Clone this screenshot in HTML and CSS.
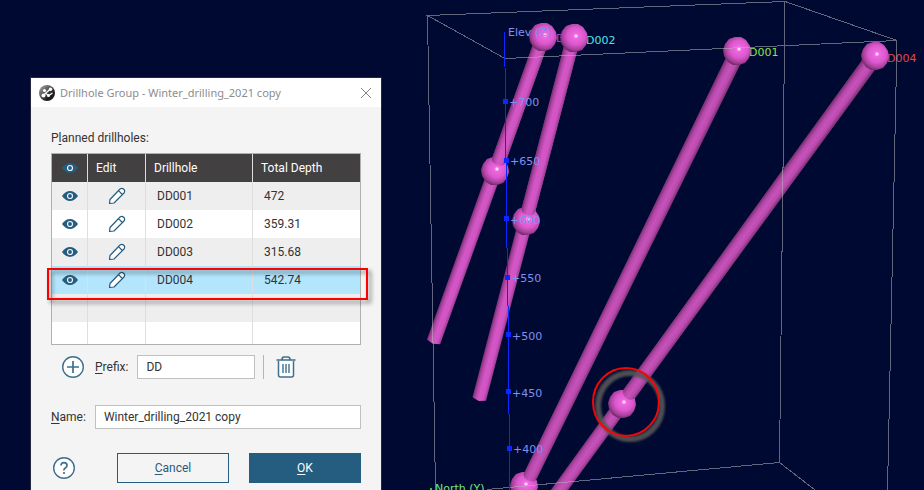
FILE: index.html
```html
<!DOCTYPE html>
<html lang="en">
<head>
<meta charset="utf-8">
<title>Drillhole Group</title>
<link rel="stylesheet" href="styles.css">
</head>
<body>
<main class="stage">
  <svg class="scene" viewBox="0 0 924 490" preserveAspectRatio="xMinYMin slice" role="img" aria-label="Drillhole scene">
    <defs>
      <linearGradient id="tube">
        <stop offset="0" stop-color="#7c2d74"/>
        <stop offset=".2" stop-color="#b046a4"/>
        <stop offset=".45" stop-color="#d456c7"/>
        <stop offset=".75" stop-color="#d054c3"/>
        <stop offset="1" stop-color="#9a3d90"/>
      </linearGradient>
      <linearGradient id="tube-dim">
        <stop offset="0" stop-color="#742b6d"/>
        <stop offset=".25" stop-color="#b248a7"/>
        <stop offset=".5" stop-color="#c851bb"/>
        <stop offset=".75" stop-color="#b84bac"/>
        <stop offset="1" stop-color="#782d70"/>
      </linearGradient>
      <radialGradient id="ball" cx=".57" cy=".43" r=".62">
        <stop offset="0" stop-color="#ffffff"/>
        <stop offset=".05" stop-color="#ffd0f8"/>
        <stop offset=".14" stop-color="#ee68df"/>
        <stop offset=".5" stop-color="#dc58ce"/>
        <stop offset=".78" stop-color="#a8409c"/>
        <stop offset="1" stop-color="#5e2358"/>
      </radialGradient>
      <path id="sphere" d="M-2-14H4L9-11 13-5 14 1 12 7 8 12 2 14H-4L-9 11-13 5-14-1-12-7-8-12Z" fill="url(#ball)"/>
      <filter id="soft" x="-20%" y="-20%" width="140%" height="140%"><feGaussianBlur stdDeviation="1"/></filter>
    </defs>

    <g class="label">
      <text x="556" y="42" fill="#a04cf0">D</text>
      <text x="586" y="44" fill="#4fe3e6">D002</text>
    </g>

    <path d="M-7 0H7V324L0 326-7 324Z" fill="url(#tube)" transform="translate(543 37) rotate(19.75)"/>
    <use href="#sphere" x="495" y="171"/>
    <path d="M-7 0H7V130Q7 136 0 136T-7 130Z" fill="url(#tube)" transform="translate(543 37) rotate(19.75)"/>
    <use href="#sphere" x="543" y="37"/>

    <path d="M-7 0H7V372L0 374-7 372Z" fill="url(#tube)" transform="translate(573 39) rotate(14.6)"/>
    <use href="#sphere" x="526" y="221"/>
    <path d="M-7 0H7V176Q7 182 0 182T-7 176Z" fill="url(#tube)" transform="translate(573 39) rotate(14.6)"/>
    <use href="#sphere" x="574" y="38"/>

    <g class="label">
      <text x="749" y="56" fill="#8fe04a">D001</text>
      <text x="887" y="62" fill="#e0464e">D004</text>
    </g>
    <use href="#sphere" x="524" y="486"/>
    <path d="M-8 0H8L7 472Q7 478 0 478T-7 472Z" fill="url(#tube-dim)" transform="translate(738 51) rotate(26.04)"/>
    <use href="#sphere" x="737" y="51"/>

    <path d="M-8 0H8L7 561H-7Z" fill="url(#tube-dim)" transform="translate(875 56) rotate(36.02)"/>
    <use href="#sphere" x="622" y="404"/>
    <path d="M-8 0H8L7 416Q7 423 0 423T-7 416Z" fill="url(#tube-dim)" transform="translate(875 56) rotate(36.02)"/>
    <use href="#sphere" x="875" y="56"/>

    <path class="frame" d="M427.500 15.500 785 1.500 897 40.500 505 58.500ZM427.500 15.500 435.500 490M785 1.500 779.500 462.500M897 40.500 887.500 490M487 489.500 779.500 462.500 815 490"/>

    <path class="axis" d="M504.500 32 505.500 101 506.500 218 508.500 334 509.500 490"/>
    <g fill="#0a28ff">
      <rect x="503" y="99" width="5" height="5"/>
      <rect x="504" y="158" width="5" height="5"/>
      <rect x="504" y="216" width="5" height="5"/>
      <rect x="505" y="275" width="5" height="5"/>
      <rect x="506" y="332" width="5" height="5"/>
      <rect x="506" y="389" width="5" height="5"/>
      <rect x="507" y="446" width="5" height="5"/>
    </g>
    <g class="label" fill="#7f90f2">
      <text x="508" y="36">Elev (Z)</text>
      <text x="509" y="106">+700</text>
      <text x="510" y="165">+650</text>
      <text x="510" y="224">+600</text>
      <text x="511" y="282">+550</text>
      <text x="512" y="340">+500</text>
      <text x="512" y="397">+450</text>
      <text x="513" y="453">+400</text>
    </g>
    <text class="label" x="435" y="492" fill="#6fe77c">North (Y)</text>
    <path d="M430 488H432V490H430Z" fill="#1fd61f"/>

    <ellipse cx="630" cy="406" rx="32" ry="33" fill="none" stroke="#555" stroke-opacity=".9" stroke-width="6" filter="url(#soft)"/>
    <ellipse cx="626" cy="402" rx="33" ry="34" fill="none" stroke="#f00808" stroke-width="2"/>
  </svg>

  <form class="dialog" aria-labelledby="title">
    <header class="titlebar">
      <svg class="logo" viewBox="0 0 16 16" aria-hidden="true">
        <defs><linearGradient id="lg" x2="1" y2="1"><stop offset=".2" stop-color="#858585"/><stop offset=".7" stop-color="#1c1c1c"/></linearGradient></defs>
        <circle cx="8" cy="8" r="8" fill="url(#lg)"/>
        <path d="M3 11.500 12 3.500M6.500 8.500 10 10.500 13.500 8" fill="none" stroke="#fff" stroke-width="1.200"/>
        <g fill="#fff"><circle cx="5.500" cy="5.500" r="1.600"/><circle cx="11.500" cy="4.200" r="1.700"/><circle cx="4.500" cy="10.500" r="2"/><circle cx="9.500" cy="10.500" r="1.500"/></g>
      </svg>
      <h1 id="title">Drillhole Group - Winter_drilling_2021 copy</h1>
      <button class="close" type="button" aria-label="Close">
        <svg viewBox="0 0 12 12"><path d="M1 1 11 11M11 1 1 11" stroke="#858585" fill="none"/></svg>
      </button>
    </header>

    <div class="body">
      <svg class="symbols" aria-hidden="true">
        <symbol id="eye" viewBox="0 0 16 10"><path d="M0 5Q3.500 0 8 0T16 5Q12.500 10 8 10T0 5Z" fill="#255d80"/><circle cx="8" cy="5" r="2.500" fill="none" stroke="#eef5f9" stroke-width="1.200"/></symbol>
        <symbol id="pencil" viewBox="0 0 18 18"><path d="M1.500 16.500 2 12.500 12 2Q14 .8 15.700 2.300T16 6L6 16ZM10.500 3.700 14.300 7.500" fill="#fff" stroke="#255d80" stroke-width="1.200" stroke-linejoin="round"/></symbol>
      </svg>
      <p class="caption" id="planned">P<u>l</u>anned drillholes:</p>
      <div class="table-wrap">
        <table aria-labelledby="planned">
          <colgroup><col class="c-eye"><col class="c-edit"><col class="c-name"><col></colgroup>
          <thead>
            <tr><th><svg class="eye"><use href="#eye"/></svg></th><th>Edit</th><th>Drillhole</th><th>Total Depth</th></tr>
          </thead>
          <tbody>
            <tr><td><svg class="eye"><use href="#eye"/></svg></td><td><svg class="pencil"><use href="#pencil"/></svg></td><td>DD001</td><td>472</td></tr>
            <tr><td><svg class="eye"><use href="#eye"/></svg></td><td><svg class="pencil"><use href="#pencil"/></svg></td><td>DD002</td><td>359.31</td></tr>
            <tr><td><svg class="eye"><use href="#eye"/></svg></td><td><svg class="pencil"><use href="#pencil"/></svg></td><td>DD003</td><td>315.68</td></tr>
            <tr class="selected"><td><svg class="eye"><use href="#eye"/></svg></td><td><svg class="pencil"><use href="#pencil"/></svg></td><td>DD004</td><td>542.74</td></tr>
            <tr><td></td><td></td><td></td><td></td></tr>
            <tr class="short"><td></td><td></td><td></td><td></td></tr>
          </tbody>
        </table>
        <div class="highlight"></div>
      </div>

      <div class="prefix-row">
        <button class="icon" type="button" aria-label="Add drillhole">
          <svg viewBox="0 0 22 22"><circle cx="11" cy="11" r="10.300" fill="#fff"/><path d="M11 5V17M5 11H17" stroke-width="1.700"/></svg>
        </button>
        <label for="prefix"><u>P</u>refix:</label>
        <input id="prefix" type="text" value="DD">
        <span class="divider"></span>
        <button class="icon" type="button" aria-label="Delete drillhole">
          <svg viewBox="0 0 22 22"><path d="M3.500 5V19Q3.500 21 5.500 21H16.500Q18.500 21 18.500 19V5" fill="#fff" stroke-width="1.500"/><path d="M1.500 4H20.500M7 4Q7 1 9 1H13Q15 1 15 4" stroke-width="1.700"/><path d="M8 8V17M11 8V17M14 8V17"/></svg>
        </button>
      </div>

      <div class="name-row">
        <label for="name"><u>N</u>ame:</label>
        <input id="name" type="text" value="Winter_drilling_2021 copy">
      </div>

      <footer class="actions">
        <button class="icon help" type="button" aria-label="Help">
          <svg viewBox="0 0 22 22"><circle cx="11" cy="11" r="10.300" fill="#fff"/><path d="M8 8.500Q8 5.700 11 5.700T14 8.500Q14 10 12.300 11T11 13.500" stroke-width="1.700"/><circle class="dot" cx="11" cy="16" r="1.100"/></svg>
        </button>
        <button class="btn" type="button"><u>C</u>ancel</button>
        <button class="btn primary" type="submit"><u>O</u>K</button>
      </footer>
    </div>
  </form>
</main>
</body>
</html>
```
FILE: styles.css
```css
* { box-sizing: border-box; }

body {
  margin: 0;
  background: #000931;
  color: #333;
  font: 12px/16px Roboto, "Liberation Sans", sans-serif;
}

.stage {
  position: relative;
  height: 100vh;
  overflow: hidden;
}

.scene {
  display: block;
  width: 100%;
  height: 100%;
}

.label { font: 11px "DejaVu Sans", sans-serif; }

.frame {
  fill: none;
  stroke: #b4b5bb;
  stroke-opacity: .55;
  shape-rendering: crispEdges;
}

.axis {
  fill: none;
  stroke: #0a28ff;
  shape-rendering: crispEdges;
}

.dialog {
  position: absolute;
  top: 78px;
  left: 31px;
  width: 350px;
  background: #f4f4f4;
  box-shadow: 0 0 0 1px #25283c;
}

.titlebar {
  display: flex;
  align-items: center;
  gap: 5px;
  height: 29px;
  padding: 0 8px;
  background: #fff;
}

.logo { width: 16px; height: 16px; }

h1 {
  flex: 1;
  margin: 0;
  color: #8c8c8c;
  font: 11px/16px "Noto Sans", sans-serif;
  white-space: nowrap;
}

button {
  padding: 0;
  border: 0;
  background: none;
  font: inherit;
}

.close { width: 14px; height: 14px; }
.close svg { display: block; width: 12px; height: 12px; margin: auto; }

.body { padding: 23px 20px 20px; }
.symbols { display: none; }
.caption { margin: 0 0 7px; line-height: 16px; }

.table-wrap { position: relative; }

table {
  width: 100%;
  border: 1px solid #b0b0b0;
  border-collapse: separate;
  border-spacing: 0;
  table-layout: fixed;
  background: #fff;
}

.c-eye { width: 36px; }
.c-edit { width: 58px; }
.c-name { width: 107px; }

th, td {
  height: 28px;
  padding: 0 0 0 11px;
  border-right: 1px solid #dedede;
  text-align: left;
  vertical-align: middle;
}

th {
  padding-left: 8px;
  background: #434041;
  color: #fff;
  font-weight: 400;
}

th:last-child, td:last-child { border-right: 0; }
th:first-child, td:first-child, td:nth-child(2) { padding: 0; text-align: center; }

tbody tr:nth-child(odd) { background: #eee; }
tbody .selected { background: #b3e5fc; }
.short td { height: 22px; }

.eye, .pencil { display: block; margin: auto; }
.eye { width: 16px; height: 10px; }
.pencil { width: 18px; height: 18px; }

.highlight {
  position: absolute;
  top: 115px;
  right: -7px;
  left: -4px;
  height: 32px;
  border: 2px solid #f00;
  filter: drop-shadow(3px 3px 2px rgba(0, 0, 0, .5));
  pointer-events: none;
}

.prefix-row, .name-row, .actions { display: flex; align-items: center; }
.prefix-row { margin: 10px 0 26px 11px; }
.name-row { margin-bottom: 24px; gap: 9px; }

.icon { width: 22px; height: 22px; }
.icon svg { display: block; fill: none; stroke: #3d708f; stroke-width: 1.4; }
.icon .dot { fill: #3d708f; stroke: none; }

.prefix-row label { margin: 0 9px 0 11px; }

input {
  min-width: 0;
  height: 24px;
  padding: 0 8px;
  border: 1px solid #c0c0c0;
  background: #fff;
  color: #333;
  font: inherit;
}

#prefix { width: 118px; }
#name { flex: 1; }

.divider {
  width: 1px;
  height: 24px;
  margin: 0 11px 0 8px;
  background: #b5b5b5;
}

.actions { gap: 20px; }
.help { margin: 0 22px 0 2px; flex: none; }

.btn {
  flex: 1;
  height: 30px;
  border: 1px solid #255d80;
  background: #f4f4f4;
  color: #255d80;
}

.primary { background: #255d80; color: #fff; }

u { text-decoration: underline; text-underline-offset: 2px; }
```
